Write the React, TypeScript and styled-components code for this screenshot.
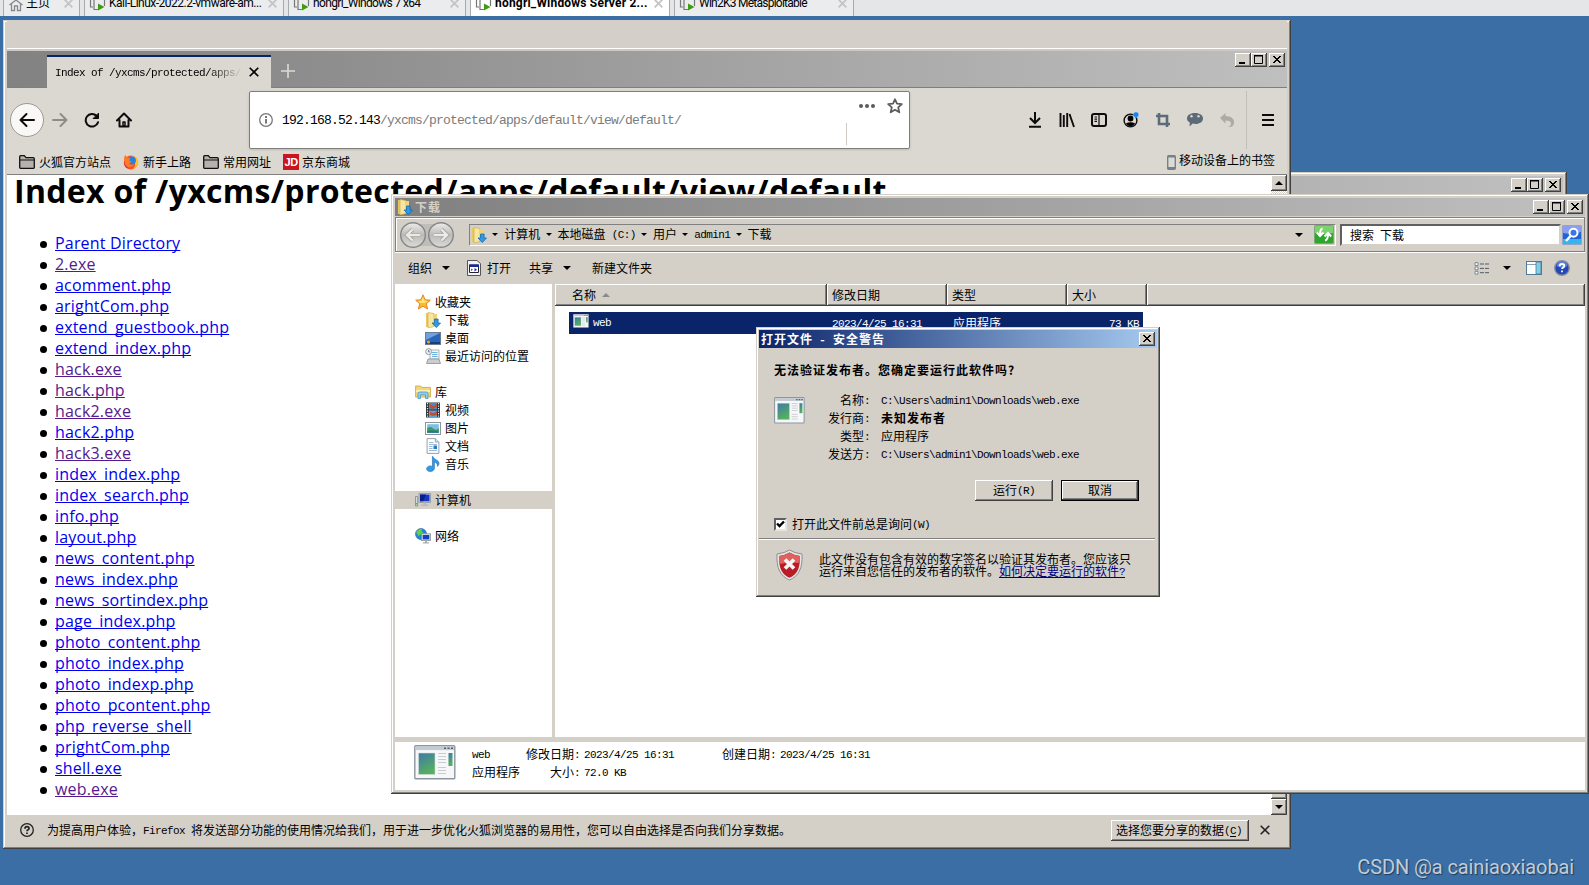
import { Fragment } from "react";
import type { ReactNode } from "react";
import styled, { createGlobalStyle, css } from "styled-components";

/* ---------- data ---------- */

const vmTabs = [
  { label: "Kali-Linux-2022.2-vmware-am...", width: 200, spacing: -0.5 },
  { label: "hongri_Windows 7 x64", width: 178, spacing: -0.65 },
  { label: "hongri_Windows Server 2...", width: 200, active: true, spacing: 0.2 },
  { label: "Win2K3 Metasploitable", width: 180, spacing: -0.75 },
];

const files = [
  { name: "Parent Directory" },
  { name: "2.exe", visited: true },
  { name: "acomment.php" },
  { name: "arightCom.php" },
  { name: "extend_guestbook.php" },
  { name: "extend_index.php" },
  { name: "hack.exe", visited: true },
  { name: "hack.php", visited: true },
  { name: "hack2.exe", visited: true },
  { name: "hack2.php" },
  { name: "hack3.exe", visited: true },
  { name: "index_index.php" },
  { name: "index_search.php" },
  { name: "info.php" },
  { name: "layout.php" },
  { name: "news_content.php" },
  { name: "news_index.php" },
  { name: "news_sortindex.php" },
  { name: "page_index.php" },
  { name: "photo_content.php" },
  { name: "photo_index.php" },
  { name: "photo_indexp.php" },
  { name: "photo_pcontent.php" },
  { name: "php_reverse_shell" },
  { name: "prightCom.php" },
  { name: "shell.exe" },
  { name: "web.exe", visited: true },
];

const crumbs = ["计算机", "本地磁盘 (C:)", "用户", "admin1", "下载"];

/* ---------- text ---------- */

// Latin runs are set in half-width cells next to the full-width glyphs
const T = ({ children }: { children: string }) => (
  <>
    {children.split(/([\x20-\x7e]+)/).map((part, i) =>
      i % 2 ? <Half key={i}>{part}</Half> : <Fragment key={i}>{part}</Fragment>
    )}
  </>
);

/* ---------- icons ---------- */

const FolderDown = () => (
  <svg width="16" height="16" viewBox="0 0 16 16">
    <path d="M1 1h5v14H1z" fill="#e8c860" />
    <path d="M3 .5l6 1v13l-6 1.500z" fill="#f7e6a0" stroke="#c9a545" strokeWidth=".6" />
    <path d="M9 2h3v7H9z" fill="#efd27c" />
    <path d="M9.5 7h3.600v4H15.500l-4.200 4.600L7 11h2.500z" fill="#2a9be6" stroke="#0d62a8" strokeWidth=".7" />
  </svg>
);

const AppIcon = ({ w = 16, h = 14 }: { w?: number; h?: number }) => (
  <svg width={w} height={h} viewBox="0 0 42 35" preserveAspectRatio="none">
    <defs>
      <linearGradient id="scr" x1="0" y1="0" x2="0.4" y2="1">
        <stop offset="0" stopColor="#3f78a8" />
        <stop offset="1" stopColor="#55b05f" />
      </linearGradient>
    </defs>
    <rect x=".8" y=".8" width="40" height="33" rx="1" fill="#f6f7f8" stroke="#8b96a0" strokeWidth="1.4" />
    <rect x="1.5" y="1.5" width="38.6" height="3.6" fill="#c3cad1" />
    <path d="M30 2.500h2v1.600h-2zM33.500 2.500h2v1.600h-2zM37 2.500h2v1.600h-2z" fill="#52606c" />
    <rect x="4.500" y="8" width="16.500" height="21.500" fill="url(#scr)" stroke="#d5dade" strokeWidth=".6" />
    <path d="M24 8.500h8M24 11.500h8M24 14.500h8M24 17.500h8M24 22.500h8M24 25.500h8M24 28.500h8" stroke="#c9cdd0" strokeWidth="1.200" />
    <rect x="34.500" y="8" width="4" height="13" fill="url(#scr)" />
  </svg>
);

const StarIcon = () => (
  <svg width="16" height="16" viewBox="0 0 16 16">
    <path d="M8 .8l2.100 4.900 5.200.5-4 3.500 1.300 5.300L8 12.200l-4.600 2.800 1.300-5.300-4-3.500 5.200-.5z" fill="#fdb92e" stroke="#e07f1c" strokeWidth=".9" />
    <path d="M8 3l1.300 3.500 3.400.4-3 2.200L5 9 3.300 6.900l3.400-.4z" fill="#ffe37c" />
  </svg>
);

const DesktopIcon = () => (
  <svg width="16" height="13" viewBox="0 0 16 13">
    <rect x=".5" y=".5" width="15" height="12" fill="#2a66b8" stroke="#6b7c92" />
    <path d="M1 1h14L1 8z" fill="#7eb0ea" opacity=".8" />
    <path d="M1 10h14v2H1z" fill="#173f7c" />
    <circle cx="3.500" cy="10" r="1.600" fill="#f2a32a" />
    <circle cx="4.300" cy="9.400" r=".8" fill="#5cc24b" />
  </svg>
);

const RecentIcon = () => (
  <svg width="16" height="16" viewBox="0 0 16 16">
    <path d="M5 2h9v9H5z" fill="#f3f5f7" stroke="#98a1a9" strokeWidth=".8" />
    <path d="M7 4.500h5.500M7 6.500h5.500M7 8.500h5.500" stroke="#6fb3dc" />
    <path d="M3 11h11l1.500 4.500h-14z" fill="#c9ced3" stroke="#8a9299" strokeWidth=".8" />
    <circle cx="3.600" cy="3.600" r="3" fill="#e6ecf0" stroke="#8a959e" strokeWidth=".9" />
    <path d="M3.600 2v1.800h1.300" stroke="#3f4a52" strokeWidth=".7" fill="none" />
  </svg>
);

const LibraryIcon = () => (
  <svg width="16" height="14" viewBox="0 0 16 14">
    <path d="M.6 2.500V1h5l1 1.400h8.800V12H.6z" fill="#f3d77c" stroke="#c9a23e" strokeWidth=".8" />
    <path d="M1 5h14v2H1z" fill="#fbefb6" />
    <path d="M3 13.500V8.600Q3 7 5 7h6q2 0 2 1.600v4.900h-2.500V9.800h-5v3.700z" fill="#8fd0f0" stroke="#4596c4" strokeWidth=".8" />
  </svg>
);

const VideoIcon = () => (
  <svg width="14" height="16" viewBox="0 0 14 16">
    <path d="M0 .5h14v15H0z" fill="#2c3238" />
    <path d="M1.500 1v14M12.500 1v14" stroke="#e8ecef" strokeWidth="1.200" strokeDasharray="1.300 1.200" />
    <path d="M3 1h8v6.500H3z" fill="#3f8fd0" />
    <path d="M3 8.500h8V15H3z" fill="#59a5de" />
    <path d="M4 2l3 2 4-2v3L7 7 4 6zM4 10l4 1 3-2v4l-4 1-3-1z" fill="#c04f36" />
  </svg>
);

const PictureIcon = () => (
  <svg width="16" height="13" viewBox="0 0 16 13">
    <rect x=".5" y=".5" width="15" height="12" fill="#fff" stroke="#8d959c" />
    <rect x="2.200" y="2.200" width="11.600" height="8.600" fill="#7cc0ea" />
    <path d="M2.200 6q3-2 6 .5t5.600-.5v4.800H2.200z" fill="#3d9c59" />
    <path d="M2.200 9q5-1.500 11.600.6v1.200H2.200z" fill="#2c6fa5" />
  </svg>
);

const DocIcon = () => (
  <svg width="13" height="16" viewBox="0 0 13 16">
    <path d="M.6.6h8.200L12.400 4v11.400H.6z" fill="#fdfdfe" stroke="#8d99a5" strokeWidth=".9" />
    <path d="M8.800.6V4h3.600" fill="#d9e0e6" stroke="#8d99a5" strokeWidth=".8" />
    <path d="M2.500 4.500H7M2.500 6.500h8M2.500 8.500H6M2.500 10.500H6M2.500 12.500h8" stroke="#8fb4d4" strokeWidth=".9" />
    <path d="M7 7.500h3.500v3.500H7z" fill="#2b7bc0" />
  </svg>
);

const MusicIcon = () => (
  <svg width="14" height="16" viewBox="0 0 14 16">
    <path d="M7 .5c.6 3.200 5.600 3.300 6 6.500.2 1.600-.8 2.800-1.600 3.400.4-2.600-1-3.800-3-4.400v6.200c0 1.900-1.700 3.300-4 3.300S.6 14.300.6 12.800s1.600-2.900 3.700-2.900c.9 0 1.700.2 2.200.5L6.400.5z" fill="#2f9be8" stroke="#1769b0" strokeWidth=".6" />
  </svg>
);

const ComputerIcon = () => (
  <svg width="16" height="14" viewBox="0 0 16 14">
    <path d="M.5 3.500h2.200V13H.5z" fill="#d6dadd" stroke="#7d868d" strokeWidth=".8" />
    <path d="M.9 10h1.400v1.500H.9z" fill="#3fbf3b" />
    <rect x="4" y=".6" width="11.500" height="8.800" fill="#c7cdd3" stroke="#8c949b" strokeWidth=".8" />
    <rect x="5" y="1.600" width="9.500" height="6.700" fill="#1138c8" />
    <path d="M5 1.600h6l-3 6.700H5z" fill="#0a1f86" />
    <path d="M8.500 9.500h2.600v2h2.400v1.500H6v-1.500h2.500z" fill="#b3bac0" />
  </svg>
);

const NetworkIcon = () => (
  <svg width="16" height="16" viewBox="0 0 16 16">
    <circle cx="6" cy="6" r="5.500" fill="#1f86e0" stroke="#1a5ca8" strokeWidth=".6" />
    <path d="M2 3q2-2.600 5-2-1 2 .4 3T5 7 2.500 8 1.200 5zM8 5l3 1-1.500 3.500L7 8z" fill="#67cc46" />
    <rect x="6.500" y="5.800" width="9" height="6.800" fill="#dfe3e7" stroke="#878f96" strokeWidth=".8" />
    <rect x="7.700" y="7" width="6.600" height="4.400" fill="#1440c4" />
    <path d="M10 12.800h2v1.400h2v1.300H8v-1.300h2z" fill="#a9b0b6" />
  </svg>
);

const BmFolder = () => (
  <svg width="16" height="14" viewBox="0 0 16 14">
    <path d="M.7 12.600V1.700q0-1 1-1h3.600l1.700 2h7.300q1 0 1 1v8.900q0 .7-.8.7H1.500q-.8 0-.8-.7z" fill="#b4b2ac" stroke="#111" strokeWidth="1.300" />
    <path d="M1 5h14" stroke="#111" strokeWidth="1" />
  </svg>
);

const FirefoxLogo = () => (
  <svg width="16" height="16" viewBox="0 0 16 16">
    <circle cx="8" cy="8.500" r="7" fill="#f4512c" />
    <path d="M8 1.500q6.500.3 7.500 6-1 7-7 8 4-2 3.600-6T7 6z" fill="#ffc32a" />
    <circle cx="8.800" cy="6.500" r="4.200" fill="#2c7fe0" />
    <path d="M1 4l1-3 2.600 2.500L7 4 6.500 6.500 8.500 8 6 9.500q1.500 2 5 .8Q9.500 14 5.500 13 1 11 1 4z" fill="#ff7a22" />
    <path d="M1.200 6q-.4 6.500 5 8.500Q1.500 14.500.8 9z" fill="#e02454" />
  </svg>
);

const Shield = () => (
  <svg width="27" height="32" viewBox="0 0 27 32">
    <path d="M13.500 1Q18 4 26 5q.6 11-2.600 17Q20.500 28 13.500 31 6.500 28 3.600 22 .4 16 1 5q8-1 12.500-4z" fill="#e6e6e6" stroke="#8e8e8e" />
    <path d="M13.500 3.500Q18 6.200 24 7q.3 9-2.400 14.500-2.500 4.800-8.100 7.300-5.600-2.500-8.100-7.300Q2.700 16 3 7q6-.8 10.500-3.500z" fill="#b81c24" />
    <path d="M13.500 3.500Q18 6.200 24 7q.1 4-.4 7-9-1-20.300 1Q2.900 11 3 7q6-.8 10.500-3.500z" fill="#e0605e" />
    <path d="M9 10.500l9 9M18 10.500l-9 9" stroke="#f4f4f4" strokeWidth="3.800" />
  </svg>
);

const VmIcon = () => (
  <svg width="17" height="13" viewBox="0 0 17 13">
    <path d="M1.500 0v7H4M5 0v9.500h4M15.500 0v6" fill="none" stroke="#777" strokeWidth="1.200" />
    <path d="M9 3.500L15.500 7 9 10.500z" fill="#3f9c12" />
  </svg>
);

const Cross = ({ size = 10, color = "#000", weight = 2 }: { size?: number; color?: string; weight?: number }) => (
  <svg width={size} height={size} viewBox="0 0 10 10">
    <path d="M.7.7l8.600 8.600M9.300.7L.7 9.300" stroke={color} strokeWidth={weight} />
  </svg>
);

const Stroke = ({ children, color = "#0c0c0d", size = 16 }: { children: ReactNode; color?: string; size?: number }) => (
  <svg width={size} height={size} viewBox="0 0 16 16" fill="none" stroke={color} strokeWidth="2" strokeLinecap="round" strokeLinejoin="round">
    {children}
  </svg>
);

/* ---------- pieces ---------- */

const WindowControls = () => (
  <Controls>
    <ControlBtn>
      <svg width="16" height="14"><path d="M4 9h6v2H4z" /></svg>
    </ControlBtn>
    <ControlBtn>
      <svg width="16" height="14"><path d="M3.500 3h8v7.500h-8zM3 2.500h9" fill="none" stroke="#000" /></svg>
    </ControlBtn>
    <ControlBtn $gap>
      <svg width="16" height="14" shapeRendering="crispEdges"><path d="M4.500 3l7 7M11.500 3l-7 7" stroke="#000" strokeWidth="1.700" /></svg>
    </ControlBtn>
  </Controls>
);

const VmBar = () => (
  <VmTabs>
    <VmTab $width={77} $home>
      <svg width="14" height="12" viewBox="0 0 14 12"><path d="M.5 5L7 0l6.500 5M2.500 4v6.500h3V6h3v4.500h3V4" fill="none" stroke="#888" strokeWidth="1.300" /></svg>
      <VmLabel $spacing={0}>主页</VmLabel>
      <Cross size={9} color="#c4c4c4" />
    </VmTab>
    {vmTabs.map((t) => (
      <VmTab key={t.label} $width={t.width} $active={t.active}>
        <VmIcon />
        <VmLabel $spacing={t.spacing} $bold={t.active}>{t.label}</VmLabel>
        <Cross size={9} color="#c4c4c4" />
      </VmTab>
    ))}
  </VmTabs>
);

const Browser = () => (
  <BrowserWindow>
    <MenuStrip />
    <TabStrip>
      <BrowserTab>
        <TabTitle><T>Index of /yxcms/protected/apps/</T></TabTitle>
        <Cross size={10} weight={1.600} />
      </BrowserTab>
      <NewTab>
        <svg width="14" height="14"><path d="M7 0v14M0 7h14" stroke="#dcdad6" strokeWidth="1.600" /></svg>
      </NewTab>
      <WindowControls />
    </TabStrip>
    <NavBar>
      <BackBtn>
        <Stroke><path d="M15 8H1.500M7.500 2L1.500 8l6 6" /></Stroke>
      </BackBtn>
      <NavIcons>
        <Stroke color="#8d8c88"><path d="M1 8h13.500M8.500 2l6 6-6 6" /></Stroke>
        <Stroke><path d="M14 10.300A6.300 6.300 0 1 1 12.500 3.800" /><path d="M14.500 1.500V6.500H9.500z" fill="#0c0c0d" strokeWidth="1" /></Stroke>
        <Stroke><path d="M1 8.500L8 1.500l7 7M3.500 8v6.500h9V8" /><path d="M7 10h2v4H7z" strokeWidth="1.500" /></Stroke>
      </NavIcons>
      <UrlBar>
        <svg width="14" height="14" viewBox="0 0 14 14">
          <circle cx="7" cy="7" r="6.300" fill="none" stroke="#777" strokeWidth="1.300" />
          <path d="M6 6h2v4.500H6zM6 3h2v2H6z" fill="#777" />
        </svg>
        <Url><b>192.168.52.143</b>/yxcms/protected/apps/default/view/default/</Url>
        <UrlActions>
          <div>
            <svg width="16" height="16" viewBox="0 0 16 16" fill="#5c5c5e"><circle cx="2" cy="8" r="2" /><circle cx="8" cy="8" r="2" /><circle cx="14" cy="8" r="2" /></svg>
            <svg width="16" height="16" viewBox="0 0 16 16"><path d="M8 1.300l2 4.400 4.800.5-3.600 3.200 1.100 4.900L8 11.800l-4.300 2.500 1.100-4.900L1.200 6.200 6 5.700z" fill="none" stroke="#5c5c5e" strokeWidth="1.800" strokeLinejoin="round" /></svg>
          </div>
          <i />
        </UrlActions>
      </UrlBar>
      <ToolIcons>
        <svg width="14" height="16" viewBox="0 0 14 16"><path d="M7 0v10.500M2 6l5 5 5-5M1 14.800h12" fill="none" stroke="#0c0c0d" strokeWidth="2" /></svg>
        <svg width="16" height="16" viewBox="0 0 16 16"><path d="M1.500 1v14M4.800 3v12M8.200 1v14M10.500 2l4.500 13" fill="none" stroke="#0c0c0d" strokeWidth="1.900" /></svg>
        <svg width="16" height="16" viewBox="0 0 16 16"><rect x="1" y="2" width="14" height="12" rx="2" fill="none" stroke="#0c0c0d" strokeWidth="2" /><path d="M8 2v12M3.500 5h2.500M3.500 7.200h2.500M3.500 9.400h2.500" stroke="#0c0c0d" strokeWidth="1.200" /></svg>
        <svg width="16" height="16" viewBox="0 0 16 16"><circle cx="7.500" cy="8.500" r="6.400" fill="none" stroke="#0c0c0d" strokeWidth="1.400" /><circle cx="7.500" cy="6.500" r="2.900" /><path d="M3 11.200q4.500-2 9 0-1.500 3-4.500 3t-4.500-3z" /><circle cx="13" cy="2.700" r="2.700" fill="#0a84ff" stroke="#dad8d0" strokeWidth=".4" /></svg>
        <svg width="16" height="16" viewBox="0 0 16 16"><path d="M4 1v11h11M1 4h11v11" fill="none" stroke="#5c6b7a" strokeWidth="2.600" /></svg>
        <svg width="16" height="16" viewBox="0 0 16 16"><path d="M8 1c4.800 0 8 2.300 8 5.500S12.800 12 8.500 12c-1 0-2-.1-2.800-.4L2.500 14.500l.3-4C1.200 9.700 0 8.500 0 6.500 0 3.300 3.200 1 8 1z" fill="#5c6b7a" /><circle cx="4.500" cy="4.300" r="1.200" fill="#dad8d0" /><circle cx="11.500" cy="4.300" r="1.200" fill="#dad8d0" /></svg>
        <svg width="16" height="16" viewBox="0 0 16 16"><path d="M1 6L6.500 1v3Q15 4 15 10.500q0 3.500-3.500 4.500H8.500q3.500-1 3.500-3.500Q12 8.500 6.500 8.500v3z" fill="#acaba8" /></svg>
      </ToolIcons>
      <MenuBtn>
        <svg width="12" height="12"><path d="M0 1h12M0 6h12M0 11h12" stroke="#0c0c0d" strokeWidth="2" /></svg>
      </MenuBtn>
    </NavBar>
    <Bookmarks>
      <Bookmark><BmFolder /><span>火狐官方站点</span></Bookmark>
      <Bookmark><FirefoxLogo /><span>新手上路</span></Bookmark>
      <Bookmark><BmFolder /><span>常用网址</span></Bookmark>
      <Bookmark $tight><JdLogo>JD</JdLogo><span>京东商城</span></Bookmark>
      <MobileBookmark>
        <svg width="9" height="15" viewBox="0 0 9 15"><rect x=".7" y=".7" width="7.600" height="13.600" rx="1" fill="#dcdad4" stroke="#76808a" strokeWidth="1.400" /><path d="M1 1.500h7M1 13h7" stroke="#76808a" strokeWidth="2" /></svg>
        移动设备上的书签
      </MobileBookmark>
    </Bookmarks>
    <Page>
      <PageBody>
        <PageTitle>Index of /yxcms/protected/apps/default/view/default</PageTitle>
        <FileList>
          {files.map((f) => (
            <li key={f.name}><FileLink $visited={f.visited}>{f.name}</FileLink></li>
          ))}
        </FileList>
      </PageBody>
      <ScrollTrack>
        <ScrollBtn><Caret $up /></ScrollBtn>
        <ScrollThumb />
        <ScrollBtn><Caret /></ScrollBtn>
      </ScrollTrack>
    </Page>
    <Notice>
      <svg width="14" height="14" viewBox="0 0 14 14"><circle cx="7" cy="7" r="6.300" fill="none" stroke="#222" strokeWidth="1.300" /><path d="M5 5.700q0-2 2-2t2 1.700q0 1-1.200 1.500-.8.400-.8 1.300M7 9.500v1.500" fill="none" stroke="#222" strokeWidth="1.700" /></svg>
      <p><T>为提高用户体验，Firefox 将发送部分功能的使用情况给我们，用于进一步优化火狐浏览器的易用性，您可以自由选择是否向我们分享数据。</T></p>
      <NoticeBtn><T>选择您要分享的数据(</T><u><T>C</T></u><T>)</T></NoticeBtn>
      <Cross size={10} weight={1.600} color="#222" />
    </Notice>
  </BrowserWindow>
);

const Explorer = () => (
  <ExplorerWindow>
    <ExplorerTitle>
      <FolderDown />
      <b>下载</b>
      <WindowControls />
    </ExplorerTitle>
    <AddressBar>
      <svg width="56" height="28" viewBox="0 0 56 28">
        <defs>
          <linearGradient id="orb" x1="0" y1="0" x2="0" y2="1">
            <stop offset="0" stopColor="#eeece9" />
            <stop offset=".5" stopColor="#bdbbb7" />
            <stop offset="1" stopColor="#dddbd7" />
          </linearGradient>
        </defs>
        <rect x="12" y="3" width="32" height="22" fill="#bfbdb8" />
        <circle cx="14" cy="14" r="12.300" fill="url(#orb)" stroke="#84878a" strokeWidth="1.400" />
        <circle cx="42" cy="14" r="12.300" fill="url(#orb)" stroke="#84878a" strokeWidth="1.400" />
        <path d="M21 14H8.500M13.500 8.500L8 14l5.500 5.500M35 14h12.500M42.500 8.500L48 14l-5.500 5.500" fill="none" stroke="#a3a19e" strokeWidth="4" />
        <path d="M21 14H8.500M13.500 8.500L8 14l5.500 5.500M35 14h12.500M42.500 8.500L48 14l-5.500 5.500" fill="none" stroke="#eceae7" strokeWidth="2.400" />
      </svg>
      <Path>
        <FolderDown />
        {crumbs.map((c) => (
          <Crumb key={c}><Caret $small /><span><T>{c}</T></span></Crumb>
        ))}
        <PathEnd>
          <Caret />
          <svg width="20" height="19" viewBox="0 0 20 19">
            <rect x=".5" y=".5" width="19" height="18" rx="1" fill="#2fa52c" stroke="#7ba87a" />
            <path d="M1 1h18v7Q10 10 1 8z" fill="#7fd071" />
            <path d="M8.500 3.500Q6 4 6 10M2.800 7.500L6 11l3.500-3.500" fill="none" stroke="#fff" strokeWidth="2" />
            <path d="M11 15.500q3-.5 3-6.500M10.500 11.500L14 8l3.200 3.500" fill="none" stroke="#fff" strokeWidth="2" />
          </svg>
        </PathEnd>
      </Path>
      <Search><T>搜索 下载</T></Search>
      <svg width="20" height="20" viewBox="0 0 20 20">
        <rect x=".5" y=".5" width="19" height="19" rx="1" fill="#2065d8" stroke="#94a4c8" />
        <path d="M1 1h18v6Q9 10 1 8z" fill="#8a9ff0" />
        <path d="M1 14h18v5H1z" fill="#35b5ee" />
        <circle cx="11.500" cy="7.800" r="4" fill="#3c76e4" stroke="#fff" strokeWidth="2" />
        <path d="M8.500 11L4 16" stroke="#fff" strokeWidth="2.600" />
      </svg>
    </AddressBar>
    <CommandBar>
      <Command $w={59}>组织<Caret /></Command>
      <Command $w={62}>
        <svg width="14" height="16" viewBox="0 0 14 16"><path d="M.5.5h9.500l3.500 3v12H.5z" fill="#f2f2f2" stroke="#555" /><path d="M2.500 5h9v7.500h-9z" fill="#fff" stroke="#223" /><path d="M2 4.500h10v2.500H2z" fill="#1a2a90" /><path d="M4 8.500l2 1.200-2 1.200z" fill="#c22" /><path d="M7.500 8l2.500 1.700-2.500 1.700z" fill="#22c" /></svg>
        打开
      </Command>
      <Command $w={63}>共享<Caret /></Command>
      <Command $w={62}>新建文件夹</Command>
      <CommandRight>
        <svg width="16" height="13" viewBox="0 0 16 13"><path d="M1 .7h3v2.800H1zM1 5h3v2.800H1zM1 9.300h3v2.800H1z" fill="#fff" stroke="#7b8894" /><path d="M6 2h4M11 2h4M6 6.400h4M11 6.400h4M6 10.700h4M11 10.700h4" stroke="#4e5c68" /></svg>
        <Caret />
        <svg width="16" height="14" viewBox="0 0 16 14"><rect x=".5" y=".5" width="15" height="13" fill="#fff" stroke="#4f7a9a" /><path d="M1 3.500h9" stroke="#7fa2bd" /><path d="M10 1h5v12h-5z" fill="#7fd0e4" stroke="#4f7a9a" strokeWidth=".8" /></svg>
        <svg width="16" height="16" viewBox="0 0 16 16"><circle cx="8" cy="8" r="7.300" fill="#2446b8" stroke="#8b909c" strokeWidth="1.400" /><path d="M2.500 6A5.600 5.600 0 0 1 13.500 6Q8 9 2.500 6z" fill="#5a80e0" /><path d="M5.700 6.200q0-2.200 2.300-2.200t2.300 1.900q0 1.100-1.300 1.700-.9.500-.9 1.400M8 10.600v1.700" fill="none" stroke="#fff" strokeWidth="1.800" /></svg>
      </CommandRight>
    </CommandBar>
    <Body>
      <Sidebar>
        <Node><StarIcon />收藏夹</Node>
        <Node $child><FolderDown />下载</Node>
        <Node $child><DesktopIcon />桌面</Node>
        <Node $child><RecentIcon />最近访问的位置</Node>
        <Node $first><LibraryIcon />库</Node>
        <Node $child><VideoIcon />视频</Node>
        <Node $child><PictureIcon />图片</Node>
        <Node $child><DocIcon />文档</Node>
        <Node $child><MusicIcon />音乐</Node>
        <Node $first $selected><ComputerIcon />计算机</Node>
        <Node $first><NetworkIcon />网络</Node>
      </Sidebar>
      <Listing>
        <HeadRow>
          <HeadCell $pad={17}>名称<SortMark /></HeadCell>
          <HeadCell>修改日期</HeadCell>
          <HeadCell>类型</HeadCell>
          <HeadCell>大小</HeadCell>
          <HeadCell />
        </HeadRow>
        <FileRow>
          <span><AppIcon w={16} h={14} /><T>web</T></span>
          <span><T>2023/4/25 16:31</T></span>
          <span>应用程序</span>
          <span><T>73 KB</T></span>
        </FileRow>
      </Listing>
    </Body>
    <Details>
      <AppIcon w={42} h={35} />
      <DetailGrid>
        <span><T>web</T></span>
        <label><T>修改日期:</T></label>
        <span><T>2023/4/25 16:31</T></span>
        <label><T>创建日期:</T></label>
        <span><T>2023/4/25 16:31</T></span>
        <span>应用程序</span>
        <label><T>大小:</T></label>
        <span><T>72.0 KB</T></span>
      </DetailGrid>
    </Details>
  </ExplorerWindow>
);

const SecurityDialog = () => (
  <Dialog>
    <DialogTitle>
      <span>打开文件 - 安全警告</span>
      <ControlBtn>
        <svg width="16" height="14" shapeRendering="crispEdges"><path d="M4.500 3l7 7M11.500 3l-7 7" stroke="#000" strokeWidth="1.700" /></svg>
      </ControlBtn>
    </DialogTitle>
    <Question>无法验证发布者。您确定要运行此软件吗?</Question>
    <Info>
      <AppIcon w={31} h={27} />
      <dl>
        <dt><T>名称:</T></dt><dd><T>C:\Users\admin1\Downloads\web.exe</T></dd>
        <dt><T>发行商:</T></dt><dd><b>未知发布者</b></dd>
        <dt><T>类型:</T></dt><dd>应用程序</dd>
        <dt><T>发送方:</T></dt><dd><T>C:\Users\admin1\Downloads\web.exe</T></dd>
      </dl>
    </Info>
    <Buttons>
      <DialogBtn><T>运行(R)</T></DialogBtn>
      <DialogBtn $primary>取消</DialogBtn>
    </Buttons>
    <Ask>
      <Checkbox>
        <svg width="9" height="9" viewBox="0 0 9 9"><path d="M1 3.500L3.500 6 8 1.500" fill="none" stroke="#000" strokeWidth="2.400" /></svg>
      </Checkbox>
      <span><T>打开此文件前总是询问(W)</T></span>
    </Ask>
    <Warning>
      <Shield />
      <p>
        此文件没有包含有效的数字签名以验证其发布者。您应该只<br />
        运行来自您信任的发布者的软件。<a><T>如何决定要运行的软件?</T></a>
      </p>
    </Warning>
  </Dialog>
);

const App = () => (
  <Desktop>
    <GlobalStyle />
    <VmBar />
    <BackWindow><BackTitle><WindowControls /></BackTitle></BackWindow>
    <Browser />
    <Explorer />
    <SecurityDialog />
    <Watermark>CSDN @a cainiaoxiaobai</Watermark>
  </Desktop>
);

export default App;

/* ---------- styles ---------- */

const GlobalStyle = createGlobalStyle`
  * { box-sizing: border-box; }
  body { margin: 0; overflow: hidden; }
  svg { display: block; flex: none; }
  p, dl, dd, ul, h1 { margin: 0; padding: 0; }
`;

const raised = css`
  background: #d4d0c8;
  box-shadow: inset -1px -1px #404040, inset 1px 1px #fff, inset -2px -2px #808080;
`;

const frame = css`
  position: absolute;
  display: flex;
  flex-direction: column;
  background: #d4d0c8;
  box-shadow: inset -1px -1px #404040, inset 1px 1px #d4d0c8, inset -2px -2px #808080, inset 2px 2px #fff;
`;

const Desktop = styled.main`
  position: relative;
  width: 1589px;
  height: 885px;
  overflow: hidden;
  background: #3a6ea5;
  color: #000;
  font: 12px/18px "Noto Sans CJK SC", sans-serif;
  white-space: nowrap;
`;

const Half = styled.span`
  font-family: "Liberation Mono", monospace;
  font-size: 11px;
  letter-spacing: -0.6px;
  line-height: 1;
  vertical-align: 1px;
  white-space: pre;
`;

const VmTabs = styled.div`
  display: flex;
  gap: 4px;
  height: 16px;
  padding-left: 3px;
  background: #e4e6e8;
`;

const VmTab = styled.div<{ $width: number; $active?: boolean; $home?: boolean }>`
  display: flex;
  align-items: flex-start;
  width: ${(p) => p.$width}px;
  height: 16px;
  padding: 0 6px 0 ${(p) => (p.$home ? 5 : 4)}px;
  background: ${(p) => (p.$active ? "#fff" : "#ebecee")};
  border: solid #a8abad;
  border-width: 0 1px;

  & > svg:last-child { margin: -1px 0 0 auto; }
`;

const VmLabel = styled.span<{ $spacing: number; $bold?: boolean }>`
  margin: -6px 0 0 3px;
  font: ${(p) => (p.$bold ? 700 : 400)} 12px/18px Roboto, "Noto Sans CJK SC", sans-serif;
  letter-spacing: ${(p) => p.$spacing}px;
`;

const Controls = styled.div`
  display: flex;
  margin-left: auto;
`;

const ControlBtn = styled.span<{ $gap?: boolean }>`
  ${raised}
  width: 16px;
  height: 14px;
  margin-left: ${(p) => (p.$gap ? 2 : 0)}px;
`;

const Caret = styled.i<{ $up?: boolean; $small?: boolean }>`
  flex: none;
  border: solid transparent;
  border-width: ${(p) => (p.$small ? "3px 3px 0" : "4px 4px 0")};
  border-top-color: #000;
  transform: ${(p) => (p.$up ? "rotate(180deg)" : "none")};
`;

const BackWindow = styled.section`
  ${frame}
  left: 1100px;
  top: 172px;
  width: 467px;
  height: 80px;
  padding: 4px;
`;

const BackTitle = styled.div`
  display: flex;
  height: 18px;
  padding: 2px 2px 0 0;
  background: linear-gradient(90deg, #aaa, #c0c0c0);
`;

const BrowserWindow = styled.section`
  ${frame}
  left: 3px;
  top: 20px;
  width: 1288px;
  height: 829px;
  padding: 0 4px;
`;

const MenuStrip = styled.div`
  height: 31px;
  background: #d4cfc9;
  box-shadow: inset 0 -2px #cdc8c2, inset 0 -3px #fff;
`;

const TabStrip = styled.div`
  display: flex;
  height: 37px;
  padding: 2px 2px 0 40px;
  background: linear-gradient(90deg, #828282, #8e8e8e 25%, #bfbfbf);
  box-shadow: inset 0 -1px #7f7f7f;
`;

const BrowserTab = styled.div`
  display: flex;
  align-items: center;
  width: 224px;
  margin-top: 2px;
  padding: 0 12px 2px 8px;
  background: #dad8d0;
  border-top: 2px solid #0a246a;
`;

const TabTitle = styled.span`
  width: 187px;
  margin-right: 7px;
  overflow: hidden;
  mask-image: linear-gradient(90deg, #000 82%, transparent);
`;

const NewTab = styled.div`
  margin: 11px 0 0 10px;
`;

const NavBar = styled.div`
  display: flex;
  align-items: center;
  height: 63px;
  padding: 0 13px 0 3px;
  background: #dad8d0;
`;

const BackBtn = styled.div`
  display: grid;
  place-items: center;
  width: 34px;
  height: 34px;
  background: #f9f8f7;
  border: 1px solid #999891;
  border-radius: 50%;
`;

const NavIcons = styled.div`
  display: flex;
  gap: 16px;
  margin-left: 8px;
`;

const UrlBar = styled.div`
  display: flex;
  align-items: center;
  width: 661px;
  height: 58px;
  margin-left: 117px;
  padding-left: 9px;
  background: #fff;
  border: 1px solid #7d7d7a;
  border-radius: 2px;
  box-shadow: 0 1px 3px #0002;
`;

const Url = styled.span`
  margin: 3px 0 0 9px;
  color: #7b7b7b;
  font: 13px/18px "Liberation Mono", monospace;
  letter-spacing: -0.8px;

  b { color: #000; font-weight: 400; }
`;

const UrlActions = styled.div`
  align-self: stretch;
  margin-left: auto;
  padding: 6px 6px 0 0;

  div { display: flex; gap: 12px; }
  i {
    display: block;
    width: 1px;
    height: 22px;
    margin: 9px 0 0 -13px;
    background: #cfcac4;
  }
`;

const ToolIcons = styled.div`
  display: flex;
  gap: 16px;
  margin-left: 118px;

  svg:first-child { margin-right: 1px; }
`;

const MenuBtn = styled.div`
  display: grid;
  place-items: center end;
  width: 28px;
  height: 58px;
  margin-left: auto;
  border-left: 1px solid #c1bfb8;
`;

const Bookmarks = styled.div`
  display: flex;
  align-items: center;
  height: 24px;
  padding: 0 12px 1px 12px;
  background: #dad8d0;
  border-bottom: 1px solid #7f7f7f;
`;

const Bookmark = styled.div<{ $tight?: boolean }>`
  display: flex;
  align-items: center;
  gap: ${(p) => (p.$tight ? 3 : 4)}px;
  margin-right: 12px;
`;

const JdLogo = styled.span`
  width: 16px;
  height: 16px;
  background: #c9151e;
  color: #fff;
  font: bold 11px/16px "Liberation Sans", sans-serif;
  letter-spacing: -0.5px;
  text-align: center;
`;

const MobileBookmark = styled.div`
  display: flex;
  align-items: center;
  gap: 3px;
  margin: -4px 0 0 auto;

  svg { margin-top: 4px; }
`;

const Page = styled.div`
  display: flex;
  height: 640px;
  background: #fff;
`;

const PageBody = styled.div`
  flex: 1;
  overflow: hidden;
  font: 16px/21px "Open Sans", sans-serif;
`;

const PageTitle = styled.h1`
  margin: -6px 0 0 7px;
  font: bold 32px/44px "Open Sans", sans-serif;
  letter-spacing: 0.33px;
`;

const FileList = styled.ul`
  margin-top: 20px;
  padding-left: 48px;
  list-style: none;

  li {
    display: flex;
    align-items: center;
    height: 21px;
  }
  li::before {
    content: "";
    width: 7px;
    height: 7px;
    margin: 1px 8px 0 -15px;
    border-radius: 50%;
    background: #000;
  }
`;

const FileLink = styled.a<{ $visited?: boolean }>`
  color: ${(p) => (p.$visited ? "#551a8b" : "#0000ee")};
  letter-spacing: 0.18px;
  text-decoration: underline;
  text-decoration-skip-ink: none;
`;

const ScrollTrack = styled.div`
  display: flex;
  flex-direction: column;
  width: 16px;
  background: repeating-conic-gradient(#fff 0 25%, #d4d0c8 0 50%) 0 0 / 2px 2px;
`;

const ScrollBtn = styled.div`
  ${raised}
  display: grid;
  place-items: center;
  height: 16px;
`;

const ScrollThumb = styled.div`
  ${raised}
  flex: 1;
  margin-top: 16px;
`;

const Notice = styled.div`
  display: flex;
  align-items: center;
  height: 30px;
  padding: 0 17px 0 13px;

  p { margin: 0 0 0 13px; }
`;

const NoticeBtn = styled.div`
  ${raised}
  width: 138px;
  height: 21px;
  margin: 0 11px 0 auto;
  padding-right: 2px;
  line-height: 19px;
  text-align: center;
`;

const ExplorerWindow = styled.section`
  ${frame}
  left: 391px;
  top: 194px;
  width: 1198px;
  height: 600px;
  padding: 4px;
`;

const ExplorerTitle = styled.div`
  display: flex;
  align-items: center;
  height: 18px;
  padding: 0 2px;
  background: linear-gradient(90deg, #808080, #c0c0c0);

  b { margin-left: 2px; color: #d4d0c8; letter-spacing: 1px; }
`;

const AddressBar = styled.div`
  display: flex;
  align-items: center;
  height: 35px;
  margin-top: 1px;
  padding: 0 2px 0 3px;
  border: 1px solid #808080;
  box-shadow: inset 1px 1px #fff, 0 1px #fff;
`;

const Path = styled.div`
  display: flex;
  align-items: center;
  width: 867px;
  height: 22px;
  margin-left: 14px;
  padding-left: 1px;
  border: solid;
  border-width: 1px;
  border-color: #808080 #fff #fff #808080;
`;

const Crumb = styled.span`
  display: flex;
  align-items: center;
  margin-left: 5.3px;

  i { margin-right: 6px; }
  span { margin-top: -1px; }
`;

const PathEnd = styled.div`
  display: flex;
  align-items: center;
  gap: 11px;
  margin: 0 1px 0 auto;
`;

const Search = styled.div`
  flex: 1;
  height: 22px;
  margin: 0 1px 0 4px;
  padding-left: 8px;
  background: #fff;
  border: 2px solid;
  border-color: #606060 #d4d0c8 #d4d0c8 #606060;
`;

const CommandBar = styled.div`
  display: flex;
  align-items: center;
  height: 32px;
  padding: 0 15px 0 13px;
`;

const Command = styled.span<{ $w: number }>`
  display: flex;
  align-items: center;
  gap: 6px;
  width: ${(p) => p.$w}px;

  i { margin-left: 4px; }
`;

const CommandRight = styled.div`
  display: flex;
  align-items: center;
  margin-left: auto;

  i { margin: 0 15px 0 13px; }
  svg:last-child { margin-left: 12px; }
`;

const Body = styled.div`
  display: flex;
  height: 453px;
`;

const Sidebar = styled.nav`
  width: 157px;
  margin-right: 3px;
  padding-top: 9px;
  background: #fff;
`;

const Node = styled.div<{ $child?: boolean; $first?: boolean; $selected?: boolean }>`
  display: flex;
  align-items: center;
  height: 18px;
  margin-top: ${(p) => (p.$first ? 18 : 0)}px;
  padding-left: ${(p) => (p.$child ? 30 : 20)}px;
  background: ${(p) => (p.$selected ? "#d4d0c8" : "none")};

  svg { width: 16px; margin-right: 4px; }
`;

const Listing = styled.div`
  flex: 1;
  background: #fff;
`;

const HeadRow = styled.div`
  display: grid;
  grid-template-columns: 272px 120px 120px 80px 1fr;
  height: 22px;
`;

const HeadCell = styled.div<{ $pad?: number }>`
  ${raised}
  display: flex;
  align-items: center;
  padding-left: ${(p) => p.$pad ?? 5}px;
`;

const SortMark = styled.i`
  margin-left: 6px;
  border: solid transparent;
  border-width: 0 4px 4px;
  border-bottom-color: #8a8a8a;
`;

const FileRow = styled.div`
  display: grid;
  grid-template-columns: 263px 121px 112px 1fr;
  align-items: center;
  width: 574px;
  height: 22px;
  margin: 6px 0 0 14px;
  background: #0a246a;
  color: #fff;

  & > span:first-child { display: flex; align-items: center; }
  & > span:last-child { text-align: right; padding-right: 4px; }
  svg { margin: -4px 4px 0 4px; }
`;

const Details = styled.footer`
  display: flex;
  height: 48px;
  margin-top: 5px;
  padding: 3px 0 0 19px;
  background: #fff;
`;

const DetailGrid = styled.div`
  display: grid;
  grid-template-columns: 50px 54px 123px 65px 1fr;
  grid-auto-rows: 18px;
  column-gap: 4px;
  align-content: start;
  margin-left: 16px;

  label { text-align: right; }
`;

const Dialog = styled.section`
  ${frame}
  left: 756px;
  top: 327px;
  width: 404px;
  height: 270px;
  padding: 3px;
`;

const DialogTitle = styled.div`
  display: flex;
  align-items: center;
  justify-content: space-between;
  height: 18px;
  padding: 0 2px;
  background: linear-gradient(90deg, #0a246a, #a6caf0);
  color: #fff;
  font-weight: 700;
  letter-spacing: 1px;
  word-spacing: 3.5px;
`;

const Question = styled.p`
  margin: 13px 0 0 15px;
  font-weight: 700;
  letter-spacing: 1px;
`;

const Info = styled.div`
  display: flex;
  margin: 12px 0 0 15px;

  svg { margin-top: 6px; }
  dl {
    display: grid;
    grid-template-columns: 65px 1fr;
    grid-auto-rows: 18px;
    column-gap: 11px;
  }
  dt { text-align: right; }
  b { letter-spacing: 1px; }
`;

const Buttons = styled.div`
  display: flex;
  gap: 8px;
  margin: 17px 0 0 216px;
`;

const DialogBtn = styled.div<{ $primary?: boolean }>`
  ${raised}
  width: 78px;
  height: 21px;
  line-height: 20px;
  text-align: center;
  ${(p) => p.$primary && css`
    box-shadow: inset 0 0 0 1px #000, inset -2px -2px #404040, inset 2px 2px #fff, inset -3px -3px #808080;
  `}
`;

const Ask = styled.div`
  display: flex;
  align-items: center;
  gap: 5px;
  margin: 14px 0 0 15px;
`;

const Checkbox = styled.span`
  display: grid;
  place-items: center;
  width: 13px;
  height: 13px;
  background: #fff;
  border: 2px solid;
  border-color: #606060 #e8e5df #e8e5df #606060;
`;

const Warning = styled.div`
  display: flex;
  gap: 16px;
  margin: 5px 2px 0 0;
  padding: 10px 0 0 17px;
  border-top: 1px solid #808080;
  box-shadow: inset 0 1px #fff;
  line-height: 12px;

  p { margin-top: 4px; }
  a { color: #000080; text-decoration: underline; }
`;

const Watermark = styled.div`
  position: absolute;
  right: 15px;
  bottom: 5px;
  color: #c3ccd6;
  font: 20px/26px Roboto, sans-serif;
  letter-spacing: -0.12px;
  text-shadow: 1px 1px 1px #1f3c5c;
`;
